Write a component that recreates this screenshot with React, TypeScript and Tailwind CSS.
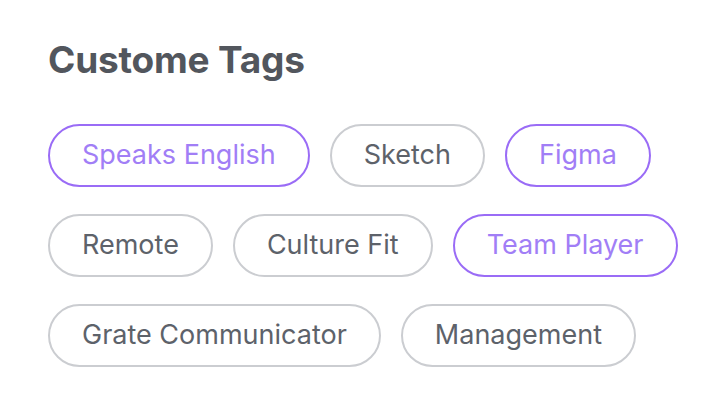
import React from "react";

type Tag = { label: string; active?: boolean };

const rows: Tag[][] = [
  [{ label: "Speaks English", active: true }, { label: "Sketch" }, { label: "Figma", active: true }],
  [{ label: "Remote" }, { label: "Culture Fit" }, { label: "Team Player", active: true }],
  [{ label: "Grate Communicator" }, { label: "Management" }],
];

function TagPill({ tag }: { tag: Tag }) {
  return (
    <span
      className={`flex h-[63px] items-center rounded-full border-2 px-[32px] text-[27px] ${
        tag.active ? "border-[#9a6cf6] text-[#a17ef6]" : "border-[#cbcdd1] text-[#5d626a]"
      }`}
    >
      {tag.label}
    </span>
  );
}

export default function App() {
  return (
    <div className="min-h-screen w-[712px] bg-white pl-12 pt-[36px] font-['Inter',sans-serif]">
      <h1 className="text-[37px] font-bold leading-[48px] tracking-[-0.2px] text-[#52565d]">Custome Tags</h1>
      <div className="mt-[40px] flex flex-col gap-[27px]">
        {rows.map((row, i) => (
          <div key={i} className="flex gap-5">
            {row.map(t => (
              <TagPill key={t.label} tag={t} />
            ))}
          </div>
        ))}
      </div>
    </div>
  );
}
